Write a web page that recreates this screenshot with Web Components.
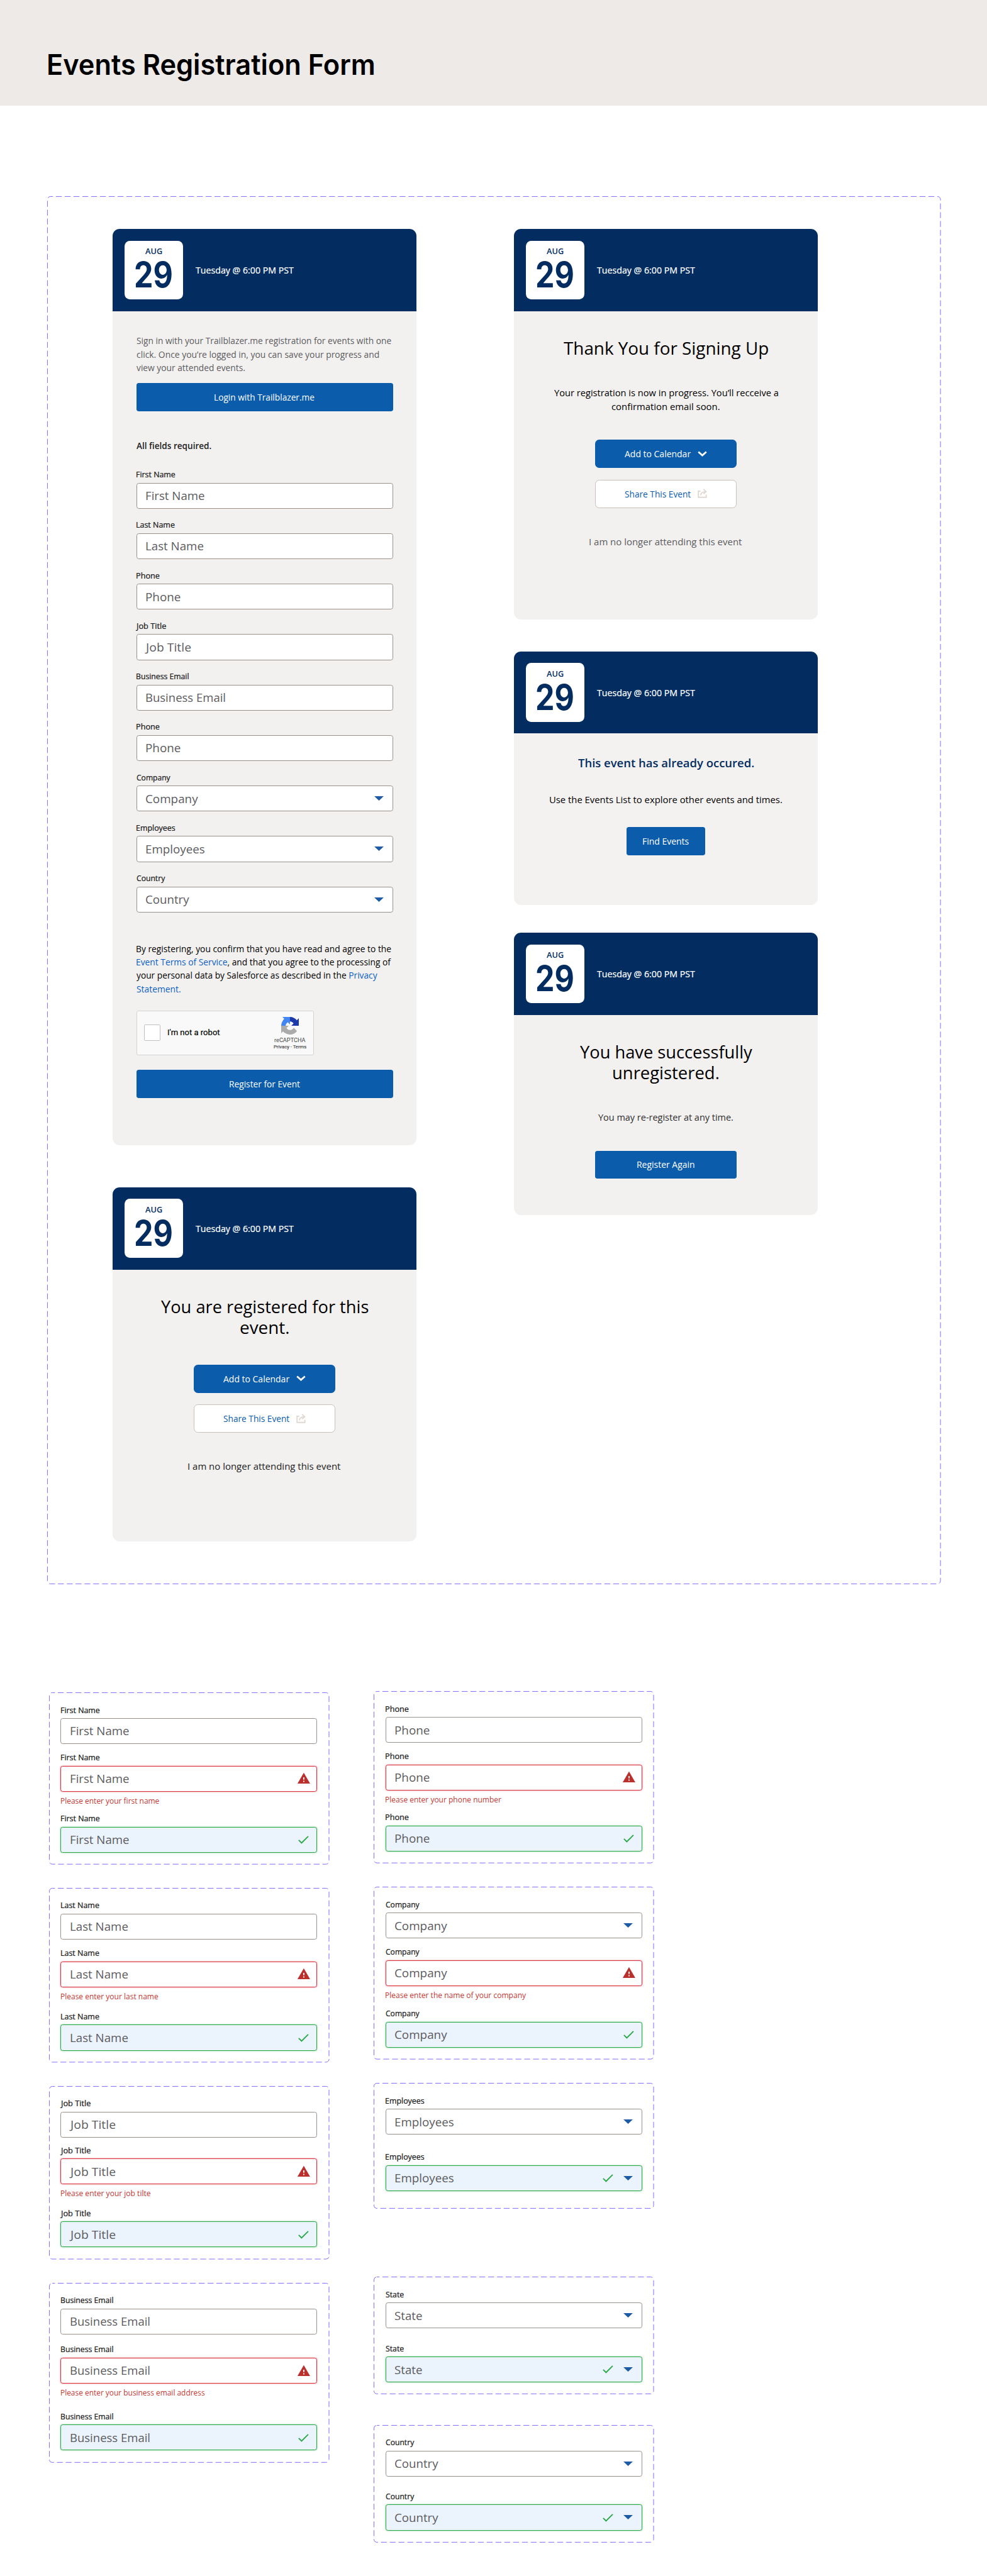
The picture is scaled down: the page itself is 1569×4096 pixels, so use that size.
<!DOCTYPE html>
<html lang="en">
<head>
<meta charset="utf-8">
<title>Events Registration Form</title>
<style>
html,body{margin:0;padding:0;background:#fff}
body{font-family:"Open Sans","Noto Sans",sans-serif;overflow:hidden}
events-page{zoom:.933929}
</style>
</head>
<body>
<events-page></events-page>
<script>
const make = (tag, html, setup) => customElements.define(tag, class extends HTMLElement {
  connectedCallback() {
    if (this.shadowRoot) return;
    const root = this.attachShadow({mode: 'open'});
    root.innerHTML = typeof html === 'function' ? html(this) : html;
    if (setup) setup(this, root);
  }
});

/* One line of text condensed or expanded so that its ink is exactly w pixels wide.
   Glyphs that hang left of the origin (J) keep their overhang. */
const ctx = document.createElement('canvas').getContext('2d');
make('fit-text', `<style>
  :host{display:inline-block;white-space:nowrap}
  span{display:inline-block;white-space:pre;transform-origin:0 50%}
</style><span><slot></slot></span>`, (el, root) => {
  const cs = getComputedStyle(el), span = root.querySelector('span');
  const w = +el.getAttribute('w');
  ctx.font = `${cs.fontWeight} ${cs.fontSize} ${cs.fontFamily}`;
  const m = ctx.measureText(el.textContent);
  const left = Math.min(m.actualBoundingBoxLeft, 0);
  const k = w / (left + m.actualBoundingBoxRight);
  span.style.transform = `scaleX(${k})`;
  span.style.marginLeft = left * k + 'px';
  span.style.marginRight = (w - m.width - left * k) + 'px';
});

/* Dashed outline round a group of components. */
make('dashed-frame', `<style>
  :host{display:block;position:relative;box-sizing:border-box}
  svg{position:absolute;inset:0;width:100%;height:100%;overflow:visible}
  rect{x:.5px;y:.5px;width:calc(100% - 1px);height:calc(100% - 1px);rx:5px;fill:none;stroke:#7b61ff;stroke-width:1;stroke-dasharray:10 5;stroke-dashoffset:5.6}
</style><svg aria-hidden="true"><rect/></svg><slot></slot>`);

make('page-header', `<style>
  :host{display:block;height:180px;background:#eeeae7;box-sizing:border-box;padding:80px 0 0 82px}
  h1{margin:0;font:600 48px/60px Inter,sans-serif;color:#000}
</style><h1><fit-text w="554">Events Registration Form</fit-text></h1>`);

make('event-card', `<style>
  :host{display:block;width:517px;border-radius:12px;overflow:hidden;background:#f2f1ef;box-sizing:border-box}
  header{height:140px;background:#032d60;display:flex;align-items:center;padding-left:20px;box-sizing:border-box}
  .date{width:100px;height:100px;border-radius:9px;background:#fff;color:#032d60;display:flex;flex-direction:column;align-items:center;box-sizing:border-box;padding-top:9px}
  .m{font-weight:600;font-size:14px;line-height:18px}
  .d{font:700 60px/44px Inter,sans-serif;margin-top:10px}
  .t{color:#fff;font-size:16px;line-height:24px;margin-left:21.4px;-webkit-text-stroke:.25px #fff}
  .body{display:flex;flex-direction:column;align-items:center}
</style>
<header><div class="date"><fit-text class="m" w="29">AUG</fit-text><fit-text class="d" w="62">29</fit-text></div>
<fit-text class="t" w="167">Tuesday @ 6:00 PM PST</fit-text></header>
<div class="body"><slot></slot></div>`);

const ICONS = {
  chevron: '<svg width="16" height="10" viewBox="0 0 16 10"><path d="M1.3 1.6 8 7.6 14.7 1.6" fill="none" stroke="#fff" stroke-width="2.9"/></svg>',
  share: '<svg width="16" height="16" viewBox="0 0 16 16"><g fill="none" stroke="#e0d9d3" stroke-width="2"><path d="M5 4.3H1.3V14.7H14.6V10.3"/><path d="M5.2 11.2C5.4 7.4 8 5.5 13.6 5.2"/><path d="M9.9.9 14.4 5 9.9 9"/></g></svg>'
};
make('ui-button', el => `<style>
  :host{display:flex;align-items:center;justify-content:center;gap:11px;height:48px;box-sizing:border-box;border-radius:4px;background:#0b5cab;color:#fff;font-size:16px;line-height:24px;width:241px;padding-bottom:1px}
  :host([full]){width:437px}
  :host([small]){width:133px}
  :host([icon]){border-radius:7px}
  :host([icon=share]){background:#fff;color:#0b5cab;border:1px solid #c9c0ba}
  svg{display:block;flex:none}
</style><slot></slot>${ICONS[el.getAttribute('icon')] || ''}`);

const LABEL_W = {'First Name':66,'Last Name':65,'Phone':39.3,'Job Title':50.5,'Business Email':89.3,'Company':58,'Employees':66,'Country':49,'State':31};
const VALUE_W = {'First Name':100,'Last Name':98.3,'Phone':59.3,'Job Title':77,'Business Email':135,'Company':88.5,'Employees':100,'Country':73.5,'State':46.4};
const WARN = '<svg class="w" width="23.4" height="23.4" viewBox="0 0 24 24"><path fill="#ba302c" d="M1 21h22L12 2 1 21z"/><path fill="#fff" d="M13 18h-2v-2h2v2zm0-4h-2v-4h2v4z"/></svg>';
const CHECK = '<svg class="c" width="24" height="24" viewBox="0 0 24 24"><path fill="#2aa84a" d="M9 16.17 4.83 12l-1.42 1.41L9 19 21 7l-1.41-1.41z"/></svg>';
const CARET = '<svg class="k" width="16" height="7.6" viewBox="0 0 16 7.6"><path fill="#1d5ba5" d="M0 0h16L8 7.6z"/></svg>';
make('form-field', el => {
  const name = el.getAttribute('name'), state = el.getAttribute('state'), sel = el.hasAttribute('select') && state !== 'error';
  const icons = (state === 'error' ? WARN : '') + (state === 'valid' ? CHECK : '') + (sel ? CARET : '');
  const err = el.getAttribute('error');
  return `<style>
  :host{display:block;width:437px}
  .l{display:flex;height:18px;font-size:13px;line-height:18px;color:#181818;-webkit-text-stroke:.25px #181818;padding:2px 0 4px .6px}
  .i{height:44px;box-sizing:border-box;border:1px solid #99908a;border-radius:4px;background:#fff;display:flex;align-items:center;padding-left:15.8px;color:#5c5c60}
  .i>fit-text{font-size:19.8px;line-height:28px}
  .i svg{display:block;flex:none}
  .sp{flex:1}
  .w{margin-right:10px}.c{margin-right:10.4px}.c+.k{margin-left:4.6px}.k{margin-right:14.4px}
  :host([state=error]) .i{border-color:#d9303e;box-shadow:0 0 3px rgba(217,48,62,.55)}
  :host([state=valid]) .i{border-color:#28a745;background:#ebf3fd;box-shadow:0 0 3px rgba(40,167,69,.55)}
  .e{display:flex;height:26px;box-sizing:border-box;padding:7.3px 0 0 .6px;font-size:13px;line-height:18px;color:#c23934}
  </style><label class="l"><fit-text w="${LABEL_W[name]}">${name}</fit-text></label>
  <div class="i"><fit-text w="${VALUE_W[name]}">${name}</fit-text><span class="sp"></span>${icons}</div>
  ${err ? `<div class="e"><fit-text w="${el.getAttribute('ew')}">${err}</fit-text></div>` : ''}`;
});

make('captcha-box', `<style>
  :host{display:flex;width:302px;height:76px;box-sizing:border-box;border:1px solid #d3d3d3;border-radius:3px;background:#f9f9f9;align-items:center;font-family:Roboto,sans-serif;color:#000}
  .b{width:28px;height:28px;box-sizing:border-box;border:2px solid #c1c1c1;border-radius:2px;background:#fff;margin-left:12px}
  .t{font-size:14px;line-height:20px;margin-left:12.4px;-webkit-text-stroke:.2px #000}
  .r{display:flex;flex-direction:column;align-items:center;margin:0 10.5px 0 auto;width:58px;color:#444;padding-top:1px}
  svg{display:block;margin-bottom:4px}
  .a{font-size:10px;line-height:12px}
  .p{font-size:8px;line-height:10px;-webkit-text-stroke:.15px #444}
</style><span class="b"></span><fit-text class="t" w="89">I'm not a robot</fit-text>
<div class="r"><svg width="30" height="30" viewBox="0 0 64 64"><path fill="#1c3aa9" d="M64 31.955l-.033-1.37V4.687l-7.16 7.16C50.948 4.674 42.033.093 32.05.093c-10.4 0-19.622 4.96-25.458 12.64l11.736 11.86a15.55 15.55 0 0 1 4.754-5.334c2.05-1.6 4.952-2.906 8.968-2.906.485 0 .86.057 1.135.163 4.976.393 9.288 3.14 11.828 7.124l-8.307 8.307L64 31.953"/><path fill="#4285f4" d="M31.862.094l-1.37.033H4.594l7.16 7.16C4.58 13.147 0 22.06 0 32.046c0 10.4 4.96 19.622 12.64 25.458L24.5 45.768a15.55 15.55 0 0 1-5.334-4.754c-1.6-2.05-2.906-4.952-2.906-8.968 0-.485.057-.86.163-1.135.393-4.976 3.14-9.288 7.124-11.828l8.307 8.307L31.86.095"/><path fill="#ababab" d="M.001 32.045l.033 1.37v25.898l7.16-7.16c5.86 7.173 14.774 11.754 24.76 11.754 10.4 0 19.622-4.96 25.458-12.64l-11.736-11.86a15.55 15.55 0 0 1-4.754 5.334c-2.05 1.6-4.952 2.906-8.968 2.906-.485 0-.86-.057-1.135-.163-4.976-.393-9.288-3.14-11.828-7.124l8.307-8.307c-10.522.04-22.4.066-27.295-.005"/></svg>
<fit-text class="a" w="53.6">reCAPTCHA</fit-text><fit-text class="p" w="56">Privacy - Terms</fit-text></div>`);

const FIELD = (name, gap = 0, state = '', extra = '') =>
  `<form-field name="${name}" ${state ? `state="${state}"` : ''} ${extra} style="margin-top:${gap}px"></form-field>`;
const ERR = (text, w) => `error="${text}" ew="${w}"`;
const GROUP = (h, top, fields) => `<dashed-frame class="g" style="height:${h}px;margin-top:${top}px">${fields}</dashed-frame>`;
const TRIO = (h, top, name, g1, g2, text, w, sel) =>
  GROUP(h, top, FIELD(name, 0, '', sel) + FIELD(name, g1, 'error', ERR(text, w)) + FIELD(name, g2, 'valid'));
const DUO = (h, top, name, g1) => GROUP(h, top, FIELD(name, 0, '', 'select') + FIELD(name, g1, 'valid', 'select'));

make('events-page', `<style>
  :host{display:block;width:1680px;height:4385px;color:#000;font-size:16px;line-height:24px}
  .main{width:1521px;height:2363px;margin:154px 0 0 80px;padding:56px 0 0 112px}
  .row{display:flex;gap:166px;align-items:flex-start}
  .stack{display:flex;flex-direction:column}
  .lines{display:flex;flex-direction:column;align-items:center}
  .left{align-items:flex-start;width:437px}
  .p23{line-height:23px}
  .h{font-size:29px;line-height:36px;margin:45px 0}
  .sheet{display:flex;gap:76px;align-items:flex-start;padding-left:83px;margin-top:182px}
  .g{width:477px;padding:20px 0 0 20px}
  a{color:#0b5fc2}
  .fields{display:flex;flex-direction:column;gap:18px}
</style>
<page-header></page-header>
<dashed-frame class="main"><div class="row">
  <div class="stack">
    <event-card style="height:1560px">
      <div class="lines left p23" style="margin-top:39px;color:#5c5c60">
        <fit-text w="434">Sign in with your Trailblazer.me registration for events with one</fit-text>
        <fit-text w="413">click. Once you’re logged in, you can save your progress and</fit-text>
        <fit-text w="185">view your attended events.</fit-text>
      </div>
      <ui-button full style="margin-top:14px"><fit-text w="170.4">Login with Trailblazer.me</fit-text></ui-button>
      <div class="lines left" style="margin-top:47px;font-weight:600;color:#222;font-size:15.5px"><fit-text w="127.5">All fields required.</fit-text></div>
      <div class="fields" style="margin-top:27px">
        ${['First Name','Last Name','Phone','Job Title','Business Email','Phone'].map(n => FIELD(n)).join('')}
        ${['Company','Employees','Country'].map(n => FIELD(n, 0, '', 'select')).join('')}
      </div>
      <div class="lines left p23" style="margin-top:50px">
        <fit-text w="434">By registering, you confirm that you have read and agree to the</fit-text>
        <fit-text w="434.3"><a>Event Terms of Service</a>, and that you agree to the processing of</fit-text>
        <fit-text w="410.7">your personal data by Salesforce as described in the <a>Privacy</a></fit-text>
        <fit-text w="75.5"><a>Statement.</a></fit-text>
      </div>
      <div class="lines left" style="margin-top:25px"><captcha-box></captcha-box></div>
      <ui-button full style="margin-top:25px"><fit-text w="120.4">Register for Event</fit-text></ui-button>
    </event-card>
    <event-card style="height:603px;margin-top:71.4px">
      <div class="lines h"><fit-text w="353">You are registered for this</fit-text><fit-text w="82.5">event.</fit-text></div>
      <ui-button icon="chevron"><fit-text w="113">Add to Calendar</fit-text></ui-button>
      <ui-button icon="share" style="margin-top:20px"><fit-text w="113">Share This Event</fit-text></ui-button>
      <fit-text w="260" style="margin-top:45px;color:#222">I am no longer attending this event</fit-text>
    </event-card>
  </div>
  <div class="stack">
    <event-card style="height:665px">
      <div class="lines h"><fit-text w="348.6">Thank You for Signing Up</fit-text></div>
      <div class="lines" style="margin-bottom:45px"><fit-text w="381.4">Your registration is now in progress. You’ll recceive a</fit-text><fit-text w="184.6">confirmation email soon.</fit-text></div>
      <ui-button icon="chevron"><fit-text w="113">Add to Calendar</fit-text></ui-button>
      <ui-button icon="share" style="margin-top:20px"><fit-text w="113">Share This Event</fit-text></ui-button>
      <fit-text w="260" style="margin-top:45px;color:#5c5c60">I am no longer attending this event</fit-text>
    </event-card>
    <event-card style="height:432px;margin-top:54px;background:#f3f2f1">
      <div class="lines" style="margin:36px 0;font-size:19px;line-height:28px;font-weight:600;color:#032d60"><fit-text w="299">This event has already occured.</fit-text></div>
      <fit-text w="396">Use the Events List to explore other events and times.</fit-text>
      <ui-button small style="margin-top:35px"><fit-text w="78">Find Events</fit-text></ui-button>
    </event-card>
    <event-card style="height:481px;margin-top:47px">
      <div class="lines h"><fit-text w="293.6">You have successfully</fit-text><fit-text w="179.3">unregistered.</fit-text></div>
      <fit-text w="230" style="color:#2e2e2e">You may re-register at any time.</fit-text>
      <ui-button style="margin-top:45px"><fit-text w="97.5">Register Again</fit-text></ui-button>
    </event-card>
  </div>
</div></dashed-frame>
<div class="sheet">
  <div class="stack">
    ${TRIO(293, 2.4, 'First Name', 13, 10, 'Please enter your first name', 167.4, '')}
    ${TRIO(297, 40, 'Last Name', 13, 14, 'Please enter your last name', 165.6, '')}
    ${TRIO(295, 40, 'Job Title', 12, 13, 'Please enter your job tilte', 152.6, '')}
    ${TRIO(306, 40, 'Business Email', 16, 20, 'Please enter your business email address', 245, '')}
  </div>
  <div class="stack">
    ${TRIO(293, .4, 'Phone', 13, 10, 'Please enter your phone number', 198, '')}
    ${TRIO(294, 40, 'Company', 13, 11, 'Please enter the name of your company', 239.7, 'select')}
    ${DUO(214, 40, 'Employees', 28)}
    ${DUO(200, 116, 'State', 24)}
    ${DUO(200, 52, 'Country', 24)}
  </div>
</div>`);
</script>
</body>
</html>
